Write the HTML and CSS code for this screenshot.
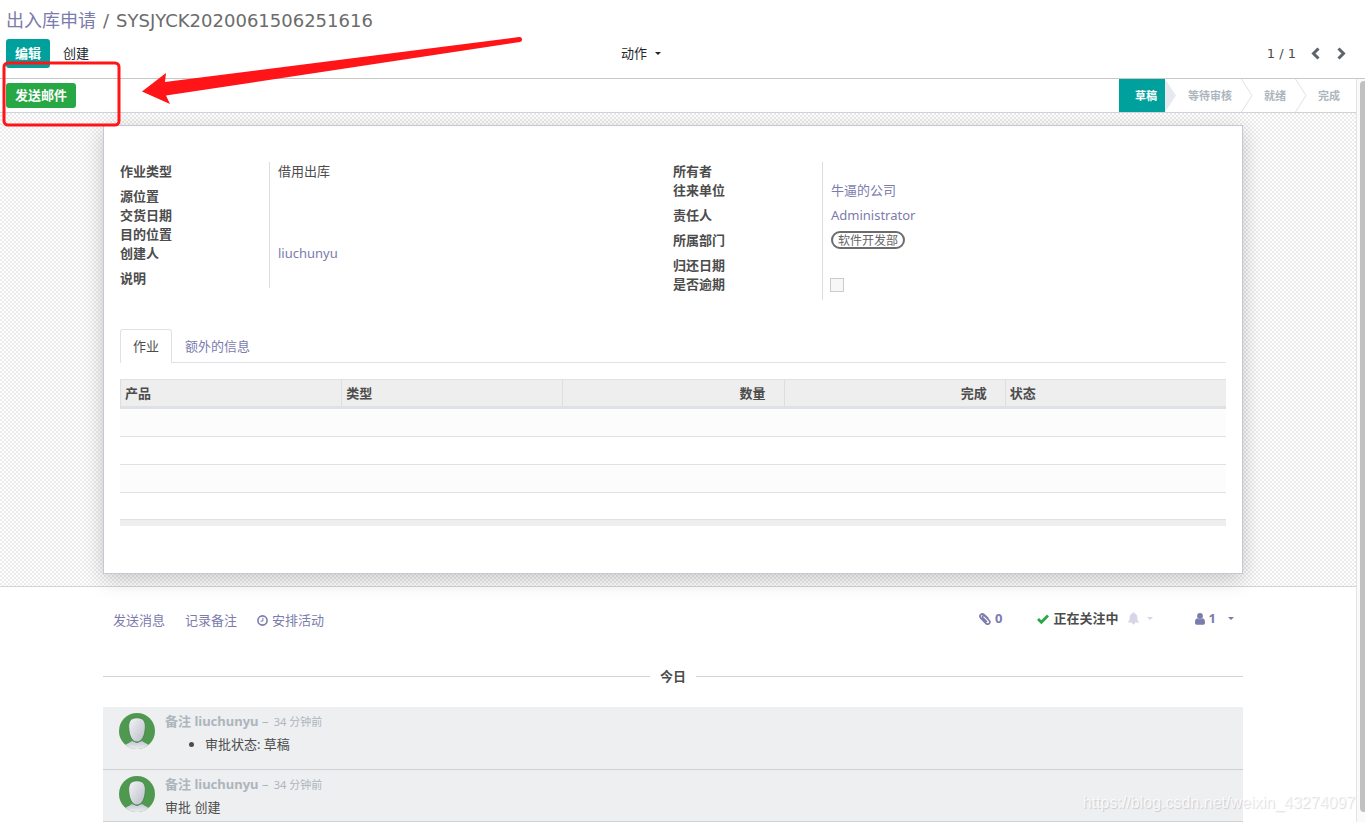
FILE: index.html
```html
<!DOCTYPE html>
<html lang="zh-CN">
<head>
<meta charset="utf-8">
<title>出入库申请</title>
<link rel="stylesheet" href="styles.css">
</head>
<body>
<header class="control-panel">
  <nav class="breadcrumb"><a href="#">出入库申请</a><span>/</span><span>SYSJYCK2020061506251616</span></nav>
  <div class="toolbar">
    <div class="toolbar-left">
      <button class="btn btn-primary">编辑</button>
      <button class="btn btn-plain">创建</button>
    </div>
    <button class="btn btn-action">动作 <i class="caret"></i></button>
    <div class="pager">
      <span>1 / 1</span>
      <button class="pager-btn" aria-label="上一页"><svg width="10" height="13" viewBox="0 0 10 13"><path d="M7.5 1.5 2.5 6.5l5 5" fill="none" stroke="#5f636a" stroke-width="3"/></svg></button>
      <button class="pager-btn" aria-label="下一页"><svg width="10" height="13" viewBox="0 0 10 13"><path d="m2.5 1.5 5 5-5 5" fill="none" stroke="#5f636a" stroke-width="3"/></svg></button>
    </div>
  </div>
</header>

<main class="content">
  <div class="statusbar">
    <button class="btn btn-success">发送邮件</button>
    <ol class="steps">
      <li class="current">草稿</li>
      <li><svg class="chevron" viewBox="0 0 12 33"><path d="M0 0 11 16.500 0 33z" fill="#e6e9ed"/></svg>等待审核</li>
      <li><svg class="chevron" viewBox="0 0 12 33"><path d="M.5 0 11 16.500.5 33" fill="none" stroke="#dee2e6"/></svg>就绪</li>
      <li><svg class="chevron" viewBox="0 0 12 33"><path d="M.5 0 11 16.500.5 33" fill="none" stroke="#dee2e6"/></svg>完成</li>
    </ol>
  </div>

  <section class="sheet-bg">
    <div class="sheet">
      <div class="groups">
        <dl class="group">
          <div class="field tall"><dt>作业类型</dt><dd>借用出库</dd></div>
          <div class="field"><dt>源位置</dt><dd></dd></div>
          <div class="field"><dt>交货日期</dt><dd></dd></div>
          <div class="field"><dt>目的位置</dt><dd></dd></div>
          <div class="field tall"><dt>创建人</dt><dd><a href="#">liuchunyu</a></dd></div>
          <div class="field"><dt>说明</dt><dd></dd></div>
        </dl>
        <dl class="group">
          <div class="field"><dt>所有者</dt><dd></dd></div>
          <div class="field tall"><dt>往来单位</dt><dd><a href="#">牛逼的公司</a></dd></div>
          <div class="field tall"><dt>责任人</dt><dd><a href="#">Administrator</a></dd></div>
          <div class="field tall"><dt>所属部门</dt><dd><span class="tag">软件开发部</span></dd></div>
          <div class="field"><dt>归还日期</dt><dd></dd></div>
          <div class="field tall"><dt><label for="overdue">是否逾期</label></dt><dd class="check-cell"><input class="check" type="checkbox" id="overdue" disabled></dd></div>
        </dl>
      </div>

      <div class="tabs">
        <a class="tab active" href="#">作业</a>
        <a class="tab" href="#">额外的信息</a>
      </div>

      <table class="lines">
        <thead><tr><th>产品</th><th>类型</th><th class="num">数量</th><th class="num">完成</th><th>状态</th></tr></thead>
        <tbody>
          <tr><td colspan="5"></td></tr>
          <tr><td colspan="5"></td></tr>
          <tr><td colspan="5"></td></tr>
          <tr><td colspan="5"></td></tr>
        </tbody>
        <tfoot><tr><td colspan="5"></td></tr></tfoot>
      </table>
    </div>
  </section>

  <section class="chatter">
    <div class="chatter-bar">
      <button class="link">发送消息</button>
      <button class="link">记录备注</button>
      <button class="link"><svg width="11" height="11" viewBox="0 0 11 11"><circle cx="5.500" cy="5.500" r="4.600" fill="none" stroke="#7c7bad" stroke-width="1.600"/><path d="M5.900 2.800v3.300H3.500" fill="none" stroke="#7c7bad"/></svg>安排活动</button>
      <div class="chatter-right">
        <button class="link strong"><svg width="12" height="12" viewBox="0 0 12 12"><path d="M8.800 5.200 5 1.700C2.800-.2-.3 2.600 1.600 4.900l5.300 5.500c2.200 2 5.200-.7 3.400-2.900L5.800 3C4.300 1.900 2.700 3.500 3.900 4.900L7.500 8.500" fill="none" stroke="#7c7bad" stroke-width="1.700" stroke-linecap="round"/></svg>0</button>
        <button class="link follow"><svg width="12" height="10" viewBox="0 0 12 10"><path d="m1 5 3.400 3.300L11 1.500" fill="none" stroke="#28a745" stroke-width="2.800"/></svg>正在关注中</button>
        <button class="link faded" aria-label="通知设置"><svg width="13" height="13" viewBox="0 0 13 13"><path d="M6.500.3c.6 0 .9.4.8 1 2 .5 3 2 3 4.200 0 2.600.7 3.900 2.200 5H8c0 1.100-.6 1.900-1.500 1.900S5 11.600 5 10.500H.5c1.500-1.100 2.200-2.400 2.200-5 0-2.200 1-3.700 3-4.200-.1-.6.2-1 .8-1z" fill="#7c7bad"/></svg><i class="caret"></i></button>
        <button class="link strong followers" aria-label="关注者"><svg width="10" height="12" viewBox="0 0 10 12"><circle cx="5" cy="3" r="2.900" fill="#7c7bad"/><path d="M2.300 5.300C.8 5.600 0 6.900 0 9.700 0 11 .8 11.800 2 11.800h6c1.200 0 2-.8 2-2.100 0-2.800-.8-4.100-2.300-4.400-1.500 1.300-3.900 1.300-5.400 0z" fill="#7c7bad"/></svg>1<i class="caret"></i></button>
      </div>
    </div>
    <div class="day">今日</div>
    <article class="message">
      <svg class="avatar" viewBox="0 0 36 36"><defs><clipPath id="round"><circle cx="18" cy="18" r="18"/></clipPath><linearGradient id="head" x1="0" y1="0" x2="1" y2="1"><stop offset="0" stop-color="#f5f5f7"/><stop offset="1" stop-color="#b9bcc6"/></linearGradient><linearGradient id="body" x1="0" y1="0" x2="0" y2="1"><stop offset="0" stop-color="#c3c6d2"/><stop offset="1" stop-color="#eceef2"/></linearGradient></defs><g clip-path="url(#round)"><path d="M0 0h36v36H0z" fill="#4f9850"/><path d="M3 36c1-4 6-5 10-8l5 2 5-2c4 3 9 4 10 8z" fill="url(#body)"/><path d="M18 4.800c-6.300 0-8.600 3.600-8.300 9.700C10 22.500 13 29 18 29s8-6.500 8.300-14.500c.3-6.100-2-9.700-8.300-9.700z" fill="url(#head)" stroke="#3d8142" stroke-width=".8"/></g></svg>
      <div class="message-body">
        <p class="meta"><b>备注 liuchunyu</b> – <small>34 分钟前</small></p>
        <ul><li>审批状态: 草稿</li></ul>
      </div>
    </article>
    <article class="message">
      <svg class="avatar" viewBox="0 0 36 36"><g clip-path="url(#round)"><path d="M0 0h36v36H0z" fill="#4f9850"/><path d="M3 36c1-4 6-5 10-8l5 2 5-2c4 3 9 4 10 8z" fill="url(#body)"/><path d="M18 4.800c-6.300 0-8.600 3.600-8.300 9.700C10 22.500 13 29 18 29s8-6.500 8.300-14.500c.3-6.100-2-9.700-8.300-9.700z" fill="url(#head)" stroke="#3d8142" stroke-width=".8"/></g></svg>
      <div class="message-body">
        <p class="meta"><b>备注 liuchunyu</b> – <small>34 分钟前</small></p>
        <p>审批 创建</p>
      </div>
    </article>
  </section>
  <div class="scrollbar"><div class="thumb"></div></div>
</main>

<svg class="annotation" width="530" height="130" viewBox="0 0 530 130"><rect x="4" y="63" width="115" height="62" rx="4" fill="none" stroke="#ff1418" stroke-width="3"/><path d="M142 91.500 166 73l-1 9L519 37a2.500 2.500 0 0 1 1 5L166 95.500l4 8.500z" fill="#ff1418"/></svg>
<div class="watermark">https://blog.csdn.net/weixin_43274097</div>
</body>
</html>
```

FILE: styles.css
```css
* { box-sizing: border-box; }
body {
  margin: 0;
  min-height: 100vh;
  position: relative;
  display: flex;
  flex-direction: column;
  font: 13px/19px "Noto Sans", "Noto Sans CJK SC", sans-serif;
  color: #4c4c4c;
  background: #fff;
}
a { color: #7c7bad; text-decoration: none; }
button { font: inherit; border: 0; background: none; padding: 0; color: inherit; cursor: pointer; }
p, ul, ol, dl, dd { margin: 0; padding: 0; }
.caret {
  display: inline-block;
  border: 3px solid transparent;
  border-top-color: currentColor;
  border-bottom: 0;
  vertical-align: middle;
}

.control-panel { padding: 8px 19px 10px 6px; border-bottom: 1px solid #c8c8c8; }
.breadcrumb { display: flex; gap: 7px; font: 18px/26px "DejaVu Sans", "Noto Sans CJK SC", sans-serif; color: #6c6c6c; }
.toolbar { display: grid; grid-template-columns: 606px auto 1fr; align-items: center; margin-top: 5px; }
.toolbar-left { display: flex; gap: 4px; }
.btn { padding: 5px 9px; border-radius: 3px; color: #212529; line-height: 19px; }
.btn-primary { background: #00a09d; color: #fff; font-weight: 700; }
.btn-action { display: flex; align-items: center; gap: 8px; }
.pager { display: flex; justify-content: flex-end; align-items: center; gap: 15px; color: #4c4c4c; font-family: "DejaVu Sans", sans-serif; }
.pager-btn { display: flex; }

.content { position: relative; flex: 1; padding-right: 9px; }
.statusbar {
  display: flex;
  justify-content: space-between;
  align-items: center;
  height: 34px;
  padding-left: 6px;
  border-bottom: 1px solid #ced4da;
}
.btn-success { background: #28a745; color: #fff; font-weight: 700; padding: 3px 9px; }
.steps { display: flex; align-self: stretch; list-style: none; font-size: 11px; font-weight: 700; color: #adb5bd; }
.steps li { display: flex; align-items: center; gap: 11px; padding-right: 9px; }
.steps li:last-child { padding-right: 16px; }
.steps .current { background: #00a09d; color: #fff; padding: 0 8px 0 16px; }
.chevron { width: 12px; height: 33px; }

.sheet-bg {
  padding: 12px 113px 12px 103px;
  border-bottom: 1px solid #d5d5d8;
  background: repeating-conic-gradient(#ebebeb 0 25%, #fff 0 50%) 0 0 / 4px 4px;
}
.sheet {
  padding: 36px 16px 47px;
  background: #fff;
  border: 1px solid #c8c8d3;
  box-shadow: 0 5px 20px rgba(0, 0, 0, .2);
}
.groups { display: grid; grid-template-columns: 1fr 1fr; align-items: start; }
.field { display: flex; height: 19px; }
.field.tall { height: 25px; }
.field dt { width: 149px; font-weight: 700; }
.field dd { flex: 1; padding-left: 8px; border-left: 1px solid #ddd; }
.field .check-cell { padding-left: 7px; }
.tag { display: block; width: fit-content; border: 2px solid #6c6c6c; border-radius: 9px; padding: 0 5px; font: 12px/14px "Noto Sans CJK SC", sans-serif; color: #666; }
.check { appearance: none; display: block; width: 14px; height: 14px; margin: 3px 0 0; border: 1px solid #ccc; background: #f7f7f7; }

.tabs { display: flex; margin-top: 29px; border-bottom: 1px solid #dee2e6; }
.tab { padding: 7px 12px; border: 1px solid transparent; border-bottom: 0; margin-bottom: -1px; }
.tab.active { color: #4c4c4c; background: #fff; border-color: #dee2e6; border-radius: 3px 3px 0 0; }

.lines { width: 100%; margin-top: 16px; border-collapse: separate; border-spacing: 0; table-layout: fixed; }
.lines th { height: 30px; padding: 0 4px; text-align: left; background: #eee; border-top: 1px solid #dee2e6; border-bottom: 3px solid #dee2e6; border-left: 1px solid #dcdfe2; }
.lines .num { text-align: right; padding-right: 18px; }
.lines td { height: 28px; padding: 0; border-bottom: 1px solid #dee2e6; }
.lines tbody tr:nth-child(odd) { background: #fcfcfc; }
.lines tbody tr:last-child td { height: 27px; }
.lines tfoot td { height: 6px; background: #eee; border: 0; }

.chatter { padding: 21px 113px 0 103px; }
.chatter-bar { display: flex; gap: 20px; padding: 0 9px 0 10px; align-items: center; height: 24px; }
.link { display: flex; align-items: center; gap: 4px; color: #7c7bad; }
.chatter-right { display: flex; margin-left: auto; align-items: center; padding-bottom: 3px; }
.strong, .follow { font-weight: 700; }
.follow { color: #4c4c4c; margin-left: 34px; gap: 5px; }
.faded { opacity: .3; margin-left: 8px; gap: 7px; }
.followers { margin-left: 42px; }
.followers .caret { margin-left: 8px; }
.day { display: flex; align-items: center; gap: 10px; margin: 35px 0 21px; font-weight: 700; }
.day::before, .day::after { content: ""; flex: 1; border-top: 1px solid #ced4da; }
.message { display: flex; gap: 10px; padding: 4px 16px 5px; background: #eeeff1; border-bottom: 1px solid #ced0d4; }
.message + .message { padding-bottom: 3px; }
.avatar { width: 36px; height: 36px; margin-top: 2px; }
.message p, .message li { line-height: 21px; }
.message .meta { color: #adb5bd; word-spacing: normal; }
.message small { font-size: 11px; margin-left: 2px; }
.message ul { padding-left: 40px; margin: 2px 0 9px; }
.message .meta + p { margin-top: 2px; }

.scrollbar { position: absolute; top: 0; right: 0; bottom: 0; width: 9px; padding: 2px 0 10px 3px; background: #fafafa; border-left: 1px solid #e4e4e4; }
.thumb { height: 100%; background: #c1c1c1; border-radius: 4px 0 0 4px; }
.annotation { position: absolute; top: 0; left: 0; pointer-events: none; }
.watermark {
  position: absolute;
  right: 10px;
  bottom: 9px;
  font: 16px/20px "Liberation Sans", sans-serif;
  color: rgba(255, 255, 255, .8);
  text-shadow: 1px 1px 1px rgba(0, 0, 0, .15);
  pointer-events: none;
}
```
